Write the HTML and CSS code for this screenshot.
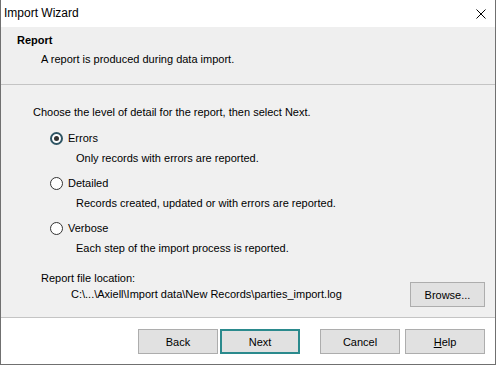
FILE: index.html
```html
<!DOCTYPE html>
<html lang="en">
<head>
<meta charset="UTF-8" />
<title>Import Wizard</title>
<link rel="stylesheet" href="styles.css">
</head>
<body>
<div class="window">
  <div class="titlebar">
    <span class="title">Import Wizard</span>
    <svg class="close" width="10" height="10" viewBox="0 0 10 10">
      <path d="M0.5 0.5 L9.5 9.5 M9.5 0.5 L0.5 9.5" stroke="#000" stroke-width="1" fill="none"/>
    </svg>
  </div>

  <div class="header">
    <div class="header-title">Report</div>
    <div class="header-sub">A report is produced during data import.</div>
  </div>

  <div class="content">
    <p class="intro">Choose the level of detail for the report, then select Next.</p>

    <div class="option">
      <label class="radio-row"><span class="radio checked"></span>Errors</label>
      <p class="hint">Only records with errors are reported.</p>
    </div>
    <div class="option">
      <label class="radio-row"><span class="radio"></span>Detailed</label>
      <p class="hint">Records created, updated or with errors are reported.</p>
    </div>
    <div class="option">
      <label class="radio-row"><span class="radio"></span>Verbose</label>
      <p class="hint">Each step of the import process is reported.</p>
    </div>

    <p class="loc-label">Report file location:</p>
    <div class="loc-row">
      <span class="path">C:\...\Axiell\Import data\New Records\parties_import.log</span>
      <button class="btn browse">Browse...</button>
    </div>
  </div>

  <div class="footer">
    <button class="btn">Back</button>
    <button class="btn default">Next</button>
    <button class="btn cancel">Cancel</button>
    <button class="btn help"><u>H</u>elp</button>
  </div>
</div>
</body>
</html>
```

FILE: styles.css
```css
body {
  margin: 0;
  background-color: #fff;
  font-family: 'Liberation Sans', Arial, sans-serif;
  font-size: 11px;
  line-height: 15px;
  color: #000;
}

p {
  margin: 0;
}

.window {
  width: 496px;
  height: 365px;
  box-sizing: border-box;
  border: 1px solid #707070;
  border-top: none;
  display: flex;
  flex-direction: column;
  background-color: #fff;
}

.titlebar {
  height: 27px;
  flex-shrink: 0;
  display: flex;
  align-items: center;
  justify-content: space-between;
  padding: 0 9px 0 3px;
}

.title {
  font-size: 12px;
}

.close {
  display: block;
}

.header {
  height: 58px;
  flex-shrink: 0;
  box-sizing: border-box;
  background-color: #efefef;
  border-bottom: 1px solid #c4c4c4;
  padding: 6px 0 0 16px;
}

.header-title {
  font-weight: bold;
}

.header-sub {
  margin: 4px 0 0 24px;
}

.content {
  flex: 1;
  background-color: #f0f0f0;
  border-bottom: 1px solid #c4c4c4;
  padding: 20px 10px 0 32px;
}

.intro {
  margin-bottom: 11px;
}

.option {
  margin-left: 17px;
}

.radio-row {
  display: flex;
  align-items: center;
  gap: 5px;
  height: 15px;
}

.radio {
  width: 13px;
  height: 13px;
  box-sizing: border-box;
  border-radius: 50%;
  border: 1px solid #333;
  background-color: #fff;
  position: relative;
}

.radio.checked {
  border: 2px solid #2f5564;
}

.radio.checked::after {
  content: "";
  position: absolute;
  left: 2px;
  top: 2px;
  width: 5px;
  height: 5px;
  border-radius: 50%;
  background-color: #333;
}

.hint {
  margin: 5px 0 10px 26px;
}

/* sibling margin collapses with the last hint's bottom margin */
.loc-label {
  margin: 15px 0 0 8px;
}

.loc-row {
  display: flex;
  align-items: center;
  justify-content: space-between;
  margin: -4px 0 0 38px;
}

.btn {
  font-family: inherit;
  font-size: 11px;
  color: #000;
  background-color: #e1e1e1;
  border: 1px solid #adadad;
  width: 80px;
  height: 25px;
  padding: 0;
  box-sizing: border-box;
}

.browse {
  width: 75px;
}

.footer {
  height: 46px;
  flex-shrink: 0;
  display: flex;
  align-items: flex-start;
  padding: 11px 0 0 137px;
  box-sizing: border-box;
}

.btn.default {
  border: 2px solid #2b8a8d;
  margin-left: 2px;
}

.btn.cancel {
  margin-left: 20px;
}

.btn.help {
  margin-left: 5px;
}
```
